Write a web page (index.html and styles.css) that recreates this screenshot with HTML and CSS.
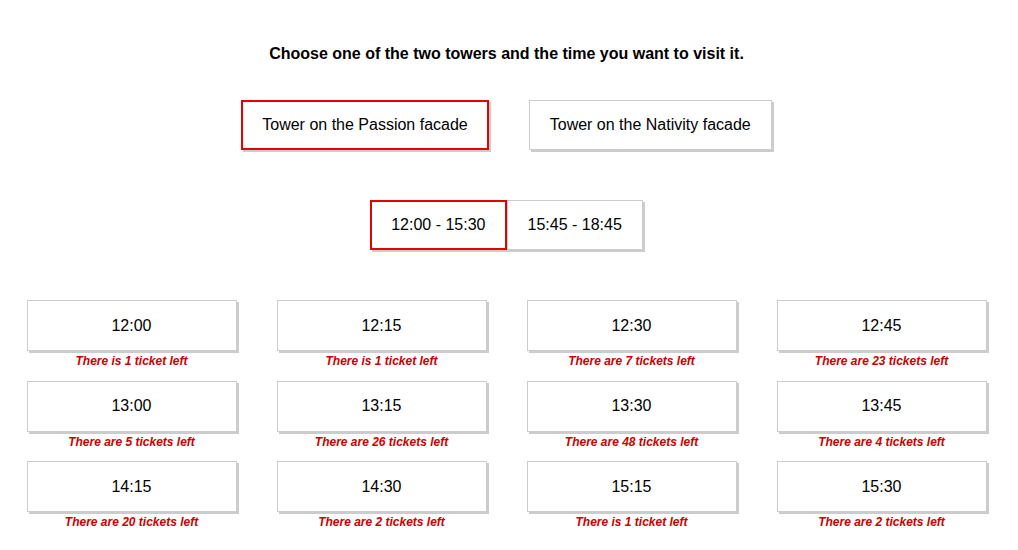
FILE: index.html
```html
<!DOCTYPE html>
<html>
<head>
<meta charset="utf-8">
<link rel="stylesheet" href="styles.css">
</head>
<body>
<div class="page">
  <h1 class="title">Choose one of the two towers and the time you want to visit it.</h1>
  <div class="towers">
    <button class="btn selected">Tower on the Passion facade</button>
    <button class="btn">Tower on the Nativity facade</button>
  </div>
  <div class="ranges">
    <button class="btn range selected">12:00 - 15:30</button>
    <button class="btn range">15:45 - 18:45</button>
  </div>
  <div class="slots">
    <div class="slot"><button class="btn time">12:00</button><span class="left">There is 1 ticket left</span></div>
    <div class="slot"><button class="btn time">12:15</button><span class="left">There is 1 ticket left</span></div>
    <div class="slot"><button class="btn time">12:30</button><span class="left">There are 7 tickets left</span></div>
    <div class="slot"><button class="btn time">12:45</button><span class="left">There are 23 tickets left</span></div>
    <div class="slot"><button class="btn time">13:00</button><span class="left">There are 5 tickets left</span></div>
    <div class="slot"><button class="btn time">13:15</button><span class="left">There are 26 tickets left</span></div>
    <div class="slot"><button class="btn time">13:30</button><span class="left">There are 48 tickets left</span></div>
    <div class="slot"><button class="btn time">13:45</button><span class="left">There are 4 tickets left</span></div>
    <div class="slot"><button class="btn time">14:15</button><span class="left">There are 20 tickets left</span></div>
    <div class="slot"><button class="btn time">14:30</button><span class="left">There are 2 tickets left</span></div>
    <div class="slot"><button class="btn time">15:15</button><span class="left">There is 1 ticket left</span></div>
    <div class="slot"><button class="btn time">15:30</button><span class="left">There are 2 tickets left</span></div>
  </div>
</div>
</body>
</html>
```
FILE: styles.css
```css
html, body {
  margin: 0;
  padding: 0;
  background: #fff;
}
body {
  font-family: "Liberation Sans", Arial, sans-serif;
  color: #000;
}
.page {
  width: 1013px;
  padding-top: 45px;
  display: flex;
  flex-direction: column;
  align-items: center;
}
.title {
  margin: 0;
  font-size: 16px;
  font-weight: bold;
  line-height: 18px;
  height: 18px;
}
.towers {
  margin-top: 37px;
  display: flex;
  gap: 40px;
}
.btn {
  font-family: "Liberation Sans", Arial, sans-serif;
  font-size: 16px;
  color: #000;
  background: #fff;
  border: 1px solid #cccccc;
  box-shadow: 2px 2px 0 #cccccc;
  height: 50px;
  padding: 0 20px;
  margin: 0;
  line-height: 18px;
  cursor: pointer;
}
.btn.selected {
  border: 2px solid #e60000;
  padding: 0 19px;
}
.ranges {
  margin-top: 50px;
  display: flex;
}
.slots {
  margin-top: 50px;
  display: grid;
  grid-template-columns: repeat(4, 210px);
  column-gap: 40px;
  row-gap: 11.5px;
}
.slot {
  display: flex;
  flex-direction: column;
  align-items: center;
}
.btn.time {
  width: 210px;
  height: 51px;
  padding: 0;
}
.left {
  margin-top: 2px;
  font-size: 12px;
  font-weight: bold;
  font-style: italic;
  color: #cc0000;
  line-height: 16px;
}
```
